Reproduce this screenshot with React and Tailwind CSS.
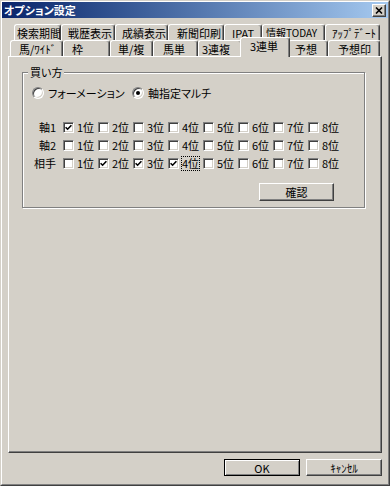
import React from "react";

const raised =
  "bg-[#d4d0c8] border border-t-white border-l-white border-b-[#404040] border-r-[#404040] shadow-[inset_-1px_-1px_0_#808080]";

function Tab({ w, pl, children, selected, tight }) {
  if (selected) {
    return (
      <div
        className="relative z-10 -mx-[2px] -mb-[1px] h-[20px] bg-[#d4d0c8] border-t border-l border-r border-t-white border-l-white border-r-[#404040] rounded-t-[3px] shadow-[inset_-1px_0_0_#808080] text-[11px] leading-[14px] pt-[1px] whitespace-nowrap"
        style={{ width: w + 4, paddingLeft: pl + 2 }}
      >
        {children}
      </div>
    );
  }
  return (
    <div
      className={
        "h-[16px] bg-[#d4d0c8] border-t border-l border-r border-t-white border-l-white border-r-[#404040] rounded-t-[3px] shadow-[inset_-1px_0_0_#808080] leading-[14px] pt-[1px] whitespace-nowrap overflow-hidden " +
        (tight ? "text-[10px]" : "text-[11px]")
      }
      style={{ width: w, paddingLeft: pl }}
    >
      {children}
    </div>
  );
}

function Check({ checked }) {
  return (
    <span className="w-[11px] h-[11px] shrink-0 bg-white border border-t-[#808080] border-l-[#808080] border-b-white border-r-white shadow-[inset_1px_1px_0_#404040,inset_-1px_-1px_0_#d4d0c8] flex items-center justify-center">
      {checked && (
        <svg width="7" height="7" viewBox="0 0 7 7">
          <path d="M0.6 3.2 L2.6 5.2 L6.4 1.2" stroke="black" strokeWidth="1.6" fill="none" />
        </svg>
      )}
    </span>
  );
}

function Radio({ checked }) {
  return (
    <span className="w-[12px] h-[12px] shrink-0 rounded-full bg-white border border-t-[#808080] border-l-[#808080] border-b-white border-r-white shadow-[inset_1px_1px_0_#404040,inset_-1px_-1px_0_#d4d0c8] flex items-center justify-center">
      {checked && <span className="w-[4px] h-[4px] rounded-full bg-black" />}
    </span>
  );
}

function Row({ label, checks, focus }) {
  return (
    <div className="flex items-center h-[18px]">
      <span className="w-[33px] text-right text-[11px] leading-[14px] whitespace-nowrap">{label}</span>
      <div className="flex ml-[7px]">
        {checks.map((c, i) => (
          <div key={i} className="w-[35px] shrink-0 flex items-center whitespace-nowrap">
            <Check checked={c} />
            <span
              className={
                "ml-[2px] text-[11px] leading-[13px] border whitespace-nowrap " +
                (focus === i ? "border-dotted border-black" : "border-transparent")
              }
            >
              {i + 1}位
            </span>
          </div>
        ))}
      </div>
    </div>
  );
}

export default function App() {
  const row1 = [
    [47, 2, "検索期間"],
    [54, 6, "戦歴表示"],
    [53, 6, "成績表示"],
    [56, 8, "新聞印刷"],
    [38, 7, "IPAT"],
    [63, 3, "情報TODAY", true],
    [55, 6, "ｱｯﾌﾟﾃﾞｰﾄ"],
  ];
  const row2 = [
    [53, 8, "馬/ﾜｲﾄﾞ", false],
    [47, 8, "枠", false],
    [43, 7, "単/複", false],
    [45, 9, "馬単", false],
    [44, 3, "3連複", false],
    [46, 7, "3連単", true],
    [40, 6, "予想", false],
    [52, 9, "予想印", false],
  ];
  return (
    <div className="w-[390px] h-[486px] bg-[#d4d0c8] border border-t-[#d4d0c8] border-l-[#d4d0c8] border-b-[#404040] border-r-[#404040] font-['Noto_Sans_CJK_JP',sans-serif] [font-feature-settings:'palt'] text-black overflow-hidden">
      <div className="h-full border border-t-white border-l-white border-b-[#808080] border-r-[#808080] flex flex-col">
        {/* title bar */}
        <div className="h-[16px] shrink-0 bg-linear-to-r from-[#0a246a] to-[#a6caf0] flex items-center justify-between pl-[2px] pr-[2px]">
          <span className="text-white font-bold text-[11px] leading-[14px]">オプション設定</span>
          <div className={"w-[14px] h-[13px] flex items-center justify-center " + raised}>
            <svg width="8" height="7" viewBox="0 0 8 7">
              <path d="M1 0.5 L7 6.5 M7 0.5 L1 6.5" stroke="black" strokeWidth="1.6" />
            </svg>
          </div>
        </div>

        <div className="flex flex-col pl-[6px] pr-[6px] pt-[6px]">
          {/* tabs row 1 */}
          <div className="flex ml-[6px] h-[16px]">
            {row1.map(([w, pl, t, tight]) => (
              <Tab key={t} w={w} pl={pl} tight={tight}>
                {t}
              </Tab>
            ))}
          </div>
          {/* tabs row 2 */}
          <div className="flex items-end ml-[2px] h-[16px]">
            {row2.map(([w, pl, t, s]) => (
              <Tab key={t} w={w} pl={pl} selected={s}>
                {t}
              </Tab>
            ))}
          </div>

          {/* panel */}
          <div className="h-[397px] border border-t-white border-l-white border-r-[#404040] border-b-[#404040] shadow-[inset_-1px_-1px_0_#808080]">
            <div className="relative ml-[13px] mt-[15px] w-[343px] h-[136px] border border-[#808080] shadow-[inset_1px_1px_0_#fff,1px_1px_0_#fff]">
              <span className="absolute left-[5px] -top-[8px] bg-[#d4d0c8] px-[2px] text-[11px] leading-[14px]">
                買い方
              </span>

              <div className="flex items-center h-[14px] mt-[13px] ml-[9px]">
                <div className="w-[100px] flex items-center">
                  <Radio />
                  <span className="ml-[4px] text-[11px] leading-[14px] whitespace-nowrap">フォーメーション</span>
                </div>
                <div className="flex items-center">
                  <Radio checked />
                  <span className="ml-[4px] text-[11px] leading-[14px] whitespace-nowrap">軸指定マルチ</span>
                </div>
              </div>

              <div className="mt-[18px] flex flex-col">
                <Row label="軸1" checks={[true, false, false, false, false, false, false, false]} />
                <Row label="軸2" checks={[false, false, false, false, false, false, false, false]} />
                <Row
                  label="相手"
                  checks={[false, true, true, true, false, false, false, false]}
                  focus={3}
                />
              </div>

              <div
                className={
                  "ml-[236px] mt-[11px] w-[75px] h-[18px] flex items-center justify-center text-[11px] leading-[14px] " +
                  raised
                }
              >
                確認
              </div>
            </div>
          </div>

          {/* bottom buttons */}
          <div className="flex justify-end gap-[6px] mt-[6px]">
            <div className="w-[76px] h-[17px] bg-[#d4d0c8] border border-black shadow-[inset_1px_1px_0_#fff,inset_-1px_-1px_0_#808080] flex items-center justify-center text-[11px] leading-[14px]">
              OK
            </div>
            <div
              className={
                "w-[76px] h-[17px] flex items-center justify-center text-[11px] leading-[14px] " + raised
              }
            >
              ｷｬﾝｾﾙ
            </div>
          </div>
        </div>
      </div>
    </div>
  );
}
